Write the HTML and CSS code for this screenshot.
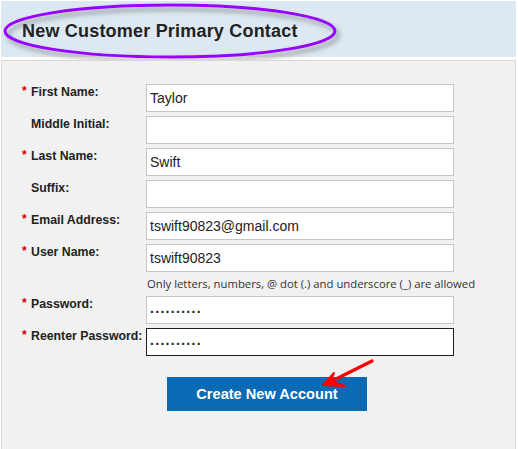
FILE: index.html
```html
<!DOCTYPE html>
<html>
<head>
<meta charset="utf-8">
<link rel="stylesheet" href="styles.css">
</head>
<body>
<div class="page">
  <header class="header">
    <h1 class="title">New Customer Primary Contact</h1>
    <svg class="ellipse" width="350" height="70" viewBox="0 0 350 70">
      <defs>
        <filter id="sh" x="-10%" y="-30%" width="120%" height="160%">
          <feDropShadow dx="3" dy="4" stdDeviation="2.5" flood-color="#555" flood-opacity="0.6"/>
        </filter>
      </defs>
      <ellipse cx="170" cy="31" rx="165" ry="26" fill="none" stroke="#9a00ff" stroke-width="3" filter="url(#sh)"/>
    </svg>
  </header>
  <section class="panel">
    <form class="form">
      <span class="req">*</span><label class="label">First Name:</label><div class="field">Taylor</div>
      <span class="req"></span><label class="label">Middle Initial:</label><div class="field"></div>
      <span class="req">*</span><label class="label">Last Name:</label><div class="field">Swift</div>
      <span class="req"></span><label class="label">Suffix:</label><div class="field"></div>
      <span class="req">*</span><label class="label">Email Address:</label><div class="field">tswift90823@gmail.com</div>
      <span class="req">*</span><label class="label">User Name:</label><div class="field">tswift90823</div>
      <span class="req"></span><span></span><p class="hint">Only letters, numbers, @ dot (.) and underscore (_) are allowed</p>
      <span class="req">*</span><label class="label">Password:</label><div class="field pw">..........</div>
      <span class="req">*</span><label class="label">Reenter Password:</label><div class="field pw focus">..........</div>
      <span></span><span></span><div class="actions"><button type="button" class="btn">Create New Account</button></div>
    </form>
    <svg class="arrow" width="60" height="34" viewBox="0 0 60 34">
      <path d="M52 3 L8 25" stroke="#f00" stroke-width="3.2" fill="none" stroke-linecap="round"/>
      <path d="M3 27 L14 15 L11 23 L25 28 Z" fill="#f00" stroke="#f00" stroke-width="2" stroke-linejoin="round"/>
    </svg>
  </section>
</div>
</body>
</html>
```
FILE: styles.css
```css
html, body {
  margin: 0;
  padding: 0;
  background: #fff;
}
body {
  font-family: "Liberation Sans", Arial, sans-serif;
  color: #222;
}
.page {
  width: 515px;
  height: 449px;
  padding: 1px 0 0 1px;
  display: flex;
  flex-direction: column;
  position: relative;
}
.header {
  height: 56px;
  background: #dde9f2;
  position: relative;
  display: flex;
  align-items: center;
  padding-left: 21px;
  margin-bottom: 3px;
}
.title {
  margin: 0;
  font-size: 18px;
  letter-spacing: 0.2px;
  font-weight: bold;
  color: #222;
  position: relative;
  top: 2px;
}
.ellipse {
  position: absolute;
  left: -1px;
  top: -1px;
  overflow: visible;
}
.panel {
  flex: 1;
  background: #f1f1f1;
  border: 1px solid #d8d8d8;
  border-bottom: none;
  position: relative;
  padding: 23px 0 0 20px;
}
.form {
  display: grid;
  grid-template-columns: 9px 115px 308px;
  row-gap: 4px;
  margin: 0;
}
.req {
  color: #c00;
  font-size: 12px;
  font-weight: bold;
  line-height: 14px;
}
.label {
  font-size: 12.3px;
  font-weight: bold;
  line-height: 16px;
  color: #222;
}
.field {
  height: 26px;
  border: 1px solid #c6c6c6;
  background: #fff;
  font-size: 14px;
  line-height: 27px;
  padding-left: 3px;
  color: #222;
}
.field.pw {
  font-size: 14px;
  font-weight: bold;
  letter-spacing: 1.3px;
  line-height: 22px;
  padding-left: 3px;
}
.field.focus {
  border-color: #1e1e1e;
}
.hint {
  margin: 0;
  padding-left: 1px;
  font-family: "Open Sans", sans-serif;
  font-size: 11.3px;
  line-height: 16px;
  color: #333;
  white-space: nowrap;
}
.actions {
  padding-top: 17px;
  padding-left: 21px;
}
.btn {
  width: 200px;
  height: 34px;
  background: #0a6ab3;
  border: none;
  color: #fff;
  font-family: "Liberation Sans", Arial, sans-serif;
  font-size: 14.6px;
  font-weight: bold;
  padding: 0;
}
.arrow {
  position: absolute;
  left: 318px;
  top: 297px;
}
```
